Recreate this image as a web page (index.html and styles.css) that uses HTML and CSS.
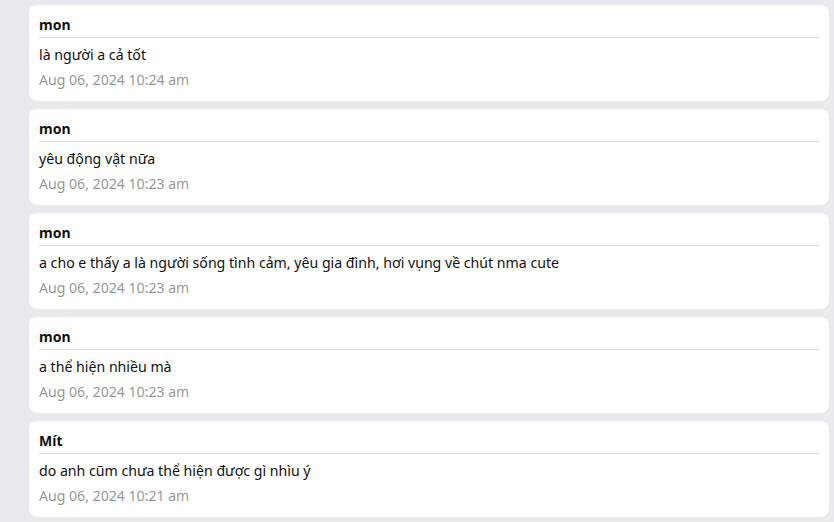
FILE: index.html
```html
<!DOCTYPE html>
<html lang="vi">
<head>
<meta charset="utf-8">
<link rel="stylesheet" href="styles.css">
</head>
<body>
<div class="list">
  <div class="card">
    <div class="name">mon</div>
    <div class="msg">là người a cả tốt</div>
    <div class="date">Aug 06, 2024 10:24 am</div>
  </div>
  <div class="card">
    <div class="name">mon</div>
    <div class="msg">yêu động vật nữa</div>
    <div class="date">Aug 06, 2024 10:23 am</div>
  </div>
  <div class="card">
    <div class="name">mon</div>
    <div class="msg">a cho e thấy a là người sống tình cảm, yêu gia đình, hơi vụng về chút nma cute</div>
    <div class="date">Aug 06, 2024 10:23 am</div>
  </div>
  <div class="card">
    <div class="name">mon</div>
    <div class="msg">a thể hiện nhiều mà</div>
    <div class="date">Aug 06, 2024 10:23 am</div>
  </div>
  <div class="card">
    <div class="name">Mít</div>
    <div class="msg">do anh cũm chưa thể hiện được gì nhìu ý</div>
    <div class="date">Aug 06, 2024 10:21 am</div>
  </div>
</div>
</body>
</html>
```
FILE: styles.css
```css
html, body {
  margin: 0;
  padding: 0;
  background: #e9eaee;
  font-family: "Noto Sans", "Open Sans", sans-serif;
  color: #111;
}
.list {
  display: flex;
  flex-direction: column;
  gap: 8px;
  padding: 5px 5px 0 29px;
}
.card {
  background: #fff;
  border-radius: 8px;
  padding: 10px 10px 11px 10px;
}
.name {
  font-weight: 700;
  font-size: 14px;
  line-height: 20px;
  padding-bottom: 2px;
  border-bottom: 1px solid #dcdcdc;
}
.msg {
  font-size: 14.15px;
  line-height: 20px;
  margin-top: 7px;
}
.date {
  font-size: 14.1px;
  line-height: 20px;
  margin-top: 5px;
  color: #999;
}
```
